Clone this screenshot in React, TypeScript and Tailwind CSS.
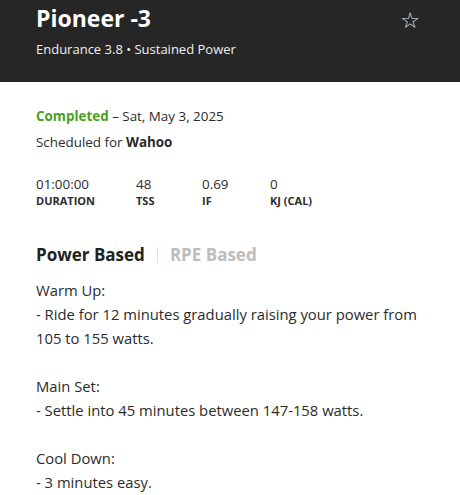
import React from "react";

export default function App() {
  const font = { fontFamily: "'Open Sans', 'Liberation Sans', sans-serif" };
  return (
    <div className="w-[460px] h-[495px] bg-white overflow-hidden" style={font}>
      <div className="bg-[#262626] h-[82px] pl-[36px] pr-[40px] flex flex-col">
        <div className="flex items-start justify-between pt-[3px]">
          <h1 className="text-[23px] leading-[30px] font-bold text-white">Pioneer -3</h1>
          <span className="text-[22px] leading-[30px] text-[#e5e5e5] mt-[3px]" style={{ fontFamily: "'DejaVu Sans', sans-serif" }}>☆</span>
        </div>
        <div className="text-[13px] leading-[18px] text-[#f0f0f0] mt-[4px]">Endurance 3.8 • Sustained Power</div>
      </div>
      <div className="pl-[36px] pt-[24px] text-[#2b2b2b]">
        <div className="text-[13.4px] leading-[20px]">
          <span className="font-bold text-[#4aa021]">Completed</span> – Sat, May 3, 2025
        </div>
        <div className="text-[13.4px] leading-[20px] mt-[6px]">
          Scheduled for <span className="font-bold">Wahoo</span>
        </div>
        <div className="flex mt-[23px]">
          {[
            ["01:00:00", "DURATION", "w-[100px]"],
            ["48", "TSS", "w-[66px]"],
            ["0.69", "IF", "w-[68px]"],
            ["0", "KJ (CAL)", "w-[80px]"],
          ].map(([v, l, w]) => (
            <div key={l} className={`${w} flex flex-col`}>
              <span className="text-[13.4px] leading-[18px]">{v}</span>
              <span className="text-[11px] leading-[15px] font-bold">{l}</span>
            </div>
          ))}
        </div>
        <div className="flex items-center mt-[35px]">
          <span className="text-[17px] leading-[24px] font-bold text-[#222]">Power Based</span>
          <span className="w-px h-[16px] bg-[#e0e0e0] mx-[12px]"></span>
          <span className="text-[17px] leading-[24px] font-bold text-[#bdbdbd]">RPE Based</span>
        </div>
        <div className="text-[14.8px] leading-[24px] text-[#2b2b2b] mt-[11px] w-[390px]">
          <div>Warm Up:</div>
          <div>- Ride for 12 minutes gradually raising your power from 105 to 155 watts.</div>
          <div className="h-[24px]"></div>
          <div>Main Set:</div>
          <div>- Settle into 45 minutes between 147-158 watts.</div>
          <div className="h-[24px]"></div>
          <div>Cool Down:</div>
          <div>- 3 minutes easy.</div>
        </div>
      </div>
    </div>
  );
}
